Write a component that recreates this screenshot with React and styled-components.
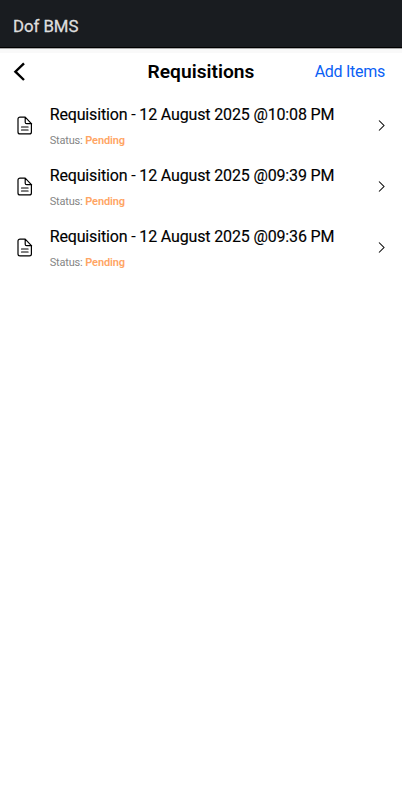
import React from "react";
import styled, { createGlobalStyle } from "styled-components";

const GlobalStyle = createGlobalStyle`
  * { box-sizing: border-box; }
  body { margin: 0; background: #fff; font-family: Roboto, sans-serif; color: #000; }
`;
const Page = styled.div`min-height: 800px; background: #fff;`;
const AppBar = styled.header`
  height: 48px; padding: 5px 13px 0; display: flex; align-items: center;
  background: #191c20; color: #dedede; font-size: 16.8px; font-weight: 400;
  letter-spacing: -0.05px; border-bottom: 1px solid #000;
  -webkit-text-stroke: 0.3px #dedede;
`;
const Toolbar = styled.nav`
  height: 48px; padding: 0 17px 2px 13px; display: grid;
  grid-template-columns: 1fr auto 1fr; align-items: center;
  border-top: 1px solid #aaa;
  background: linear-gradient(#f9f9f9 4px, #fff 4px);
`;
const BackButton = styled.button`
  border: 0; padding: 0; background: none; display: flex; justify-self: start;
`;
const Title = styled.h1`
  margin: 0 -2px 0 2px; font-size: 19.2px; line-height: 24px; font-weight: 600;
`;
const AddLink = styled.a`
  justify-self: end; font-size: 16px; letter-spacing: -0.28px; color: #0a60f5;
`;
const List = styled.ul`margin: 0; padding: 0; list-style: none;`;
const Row = styled.li`
  height: 61px; padding: 0 15px 2px 16px; display: flex; align-items: center;
  > svg { margin-top: -1px; }
`;
const RowText = styled.div`flex: 1; margin-left: 15.7px;`;
const Name = styled.div`
  font-size: 16px; line-height: 22px; letter-spacing: -0.15px;
  white-space: nowrap; -webkit-text-stroke: 0.15px #000;
`;
const Status = styled.div`
  margin-top: 7px; margin-bottom: -1px; font-size: 11px; line-height: 16px;
  letter-spacing: -0.17px; color: #858585;
`;
const Pending = styled.span`color: #ffa564; font-weight: 600; letter-spacing: -0.1px;`;

const times = ["10:08", "09:39", "09:36"];

export default function App() {
  return (
    <Page>
      <GlobalStyle />
      <AppBar>Dof BMS</AppBar>
      <Toolbar>
        <BackButton aria-label="Back">
          <svg width="13" height="20" viewBox="0 0 13 20" fill="none" stroke="#000" strokeWidth="2.4"><path d="M11 1.3 2.4 9.7l8.6 8.3" /></svg>
        </BackButton>
        <Title>Requisitions</Title>
        <AddLink>Add Items</AddLink>
      </Toolbar>
      <List>
        {times.map((t) => (
          <Row key={t}>
            <svg width="18" height="20" viewBox="0 -0.5 18 20" fill="none" stroke="#000" strokeWidth="1.2" strokeLinejoin="round" strokeLinecap="round"><path d="M9.2 1.6H4a2 2 0 0 0-2 2v12.8a2 2 0 0 0 2 2h9.4a2 2 0 0 0 2-2V8.2zv5.1a1.5 1.5 0 0 0 1.5 1.5h4.9M5.5 11.5h6.6M5.5 14.5h6.6" /></svg>
            <RowText>
              <Name>Requisition - 12 August 2025 @{t} PM</Name>
              <Status>Status: <Pending>Pending</Pending></Status>
            </RowText>
            <svg width="10" height="12" viewBox="0 -0.5 10 12" fill="none" stroke="#000" strokeWidth="1.05"><path d="m2 1 5 5-5 5" /></svg>
          </Row>
        ))}
      </List>
    </Page>
  );
}
